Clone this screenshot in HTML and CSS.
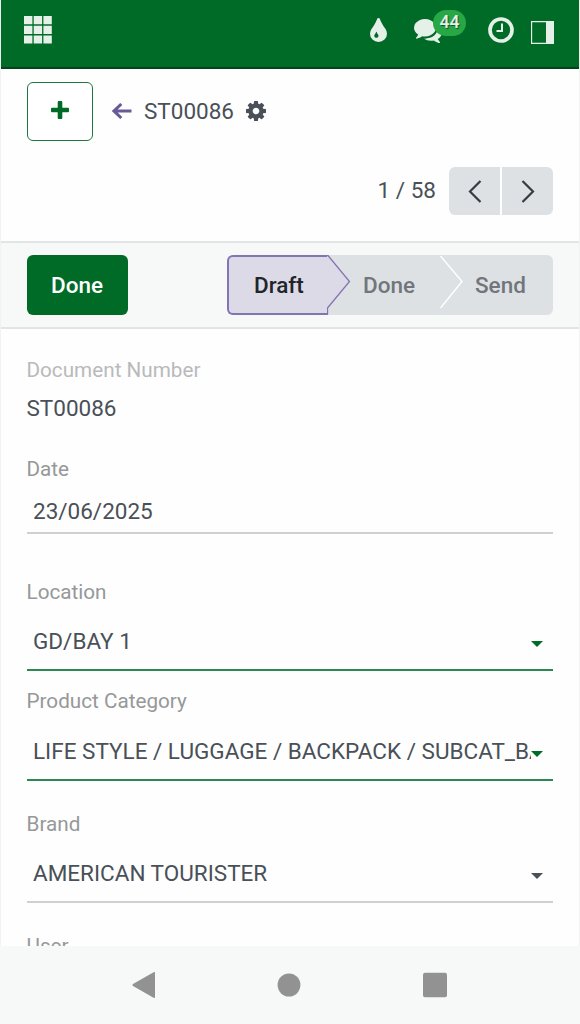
FILE: index.html
```
<!DOCTYPE html>
<html lang="en">

<head>
    <meta charset="UTF-8">
    <meta name="viewport" content="width=device-width, initial-scale=1.0">
    <title>ST00086</title>
    <link rel="stylesheet" href="styles.css">
</head>

<body>
    <div class="app">
        <!-- Navbar -->
        <header class="navbar">
            <a href="#" class="apps" aria-label="Apps">
                <svg width="28" height="28" viewBox="0 0 28 28" fill="currentColor">
                    <path d="M0 0h8.4v8.2H0zM9.7 0h8.4v8.2H9.7zM19.4 0h8.4v8.2h-8.4zM0 9.7h8.4v8.2H0zM9.7 9.7h8.4v8.2H9.7zM19.4 9.7h8.4v8.2h-8.4zM0 19.4h8.4v8.2H0zM9.7 19.4h8.4v8.2H9.7zM19.4 19.4h8.4v8.2h-8.4z"/>
                </svg>
            </a>
            <div class="systray">
                <svg class="tint" viewBox="0 0 1024 1536" preserveAspectRatio="none" fill="currentColor">
                    <path d="M512 1152q0-36-20-69-1-1-15.500-22.500t-25.500-38-25-44-21-50.500q-4-16-21-16t-21 16q-7 23-21 50.500t-25 44-25.500 38-15.500 22.500q-20 33-20 69 0 53 37.500 90.500t90.500 37.500 90.500-37.500 37.500-90.500zm512-128q0 212-150 362t-362 150-362-150-150-362q0-145 81-275 6-9 62.500-90.500t101-151 99.500-178 83-201.500q9-30 34-47t51-17 51.500 17 33.500 47q28 93 83 201.500t99.500 178 101 151 62.500 90.500q81 127 81 275z"/>
                </svg>
                <div class="messages">
                    <svg class="comments" viewBox="0 256 1792 1408" preserveAspectRatio="none" fill="currentColor">
                        <path d="M1408 768q0 139-94 257t-256.500 186.500-353.500 68.500q-86 0-176-16-124 88-278 128-36 9-86 16h-3q-11 0-20.500-8t-11.500-21q-1-3-1-6.500t.5-6.500 2-6l2.500-5 3.500-5.500 4-5 4.500-5 4-4.500q5-6 23-25t26-29.500 22.500-29 25-38.500 20.500-44q-124-72-195-177t-71-224q0-139 94-257t256.500-186.500 353.500-68.500 353.500 68.500 256.500 186.500 94 257zm384 256q0 120-71 224.500t-195 176.500q10 24 20.500 44t25 38.500 22.500 29 26 29.500 23 25q1 1 4 4.500t4.500 5 4 5 3.500 5.500l2.500 5 2 6 .5 6.500-1 6.500q-3 14-13 22t-22 7q-50-7-86-16-154-40-278-128-90 16-176 16-271 0-472-132 58 4 88 4 161 0 309-45t264-129q125-92 192-212t67-254q0-77-23-152 129 71 204 178t75 230z"/>
                    </svg>
                    <span class="badge">44</span>
                </div>
                <svg class="clock" viewBox="0 0 26 26" fill="none" stroke="currentColor">
                    <circle cx="13" cy="13" r="11" stroke-width="3.700"/>
                    <path d="M14 6.500v7.500H8.500" stroke-width="2"/>
                </svg>
                <svg class="panel" viewBox="0 0 23 23">
                    <path d="M.5.5h22v22H.5z" fill="none" stroke="currentColor" stroke-width="1.300"/>
                    <path d="M15 0h8v23h-8z" fill="currentColor"/>
                </svg>
            </div>
        </header>

        <!-- Control panel -->
        <div class="control-panel">
            <div class="breadcrumb">
                <button class="btn-new" aria-label="New">
                    <svg width="18" height="18" viewBox="0 0 18 18" fill="currentColor">
                        <path d="M7.700 0h2.600q1 0 1 1v5.700H17q1 0 1 1v2.600q0 1-1 1h-5.700V17q0 1-1 1H7.700q-1 0-1-1v-5.700H1q-1 0-1-1V7.700q0-1 1-1h5.700V1q0-1 1-1z"/>
                    </svg>
                </button>
                <a href="#" class="back" aria-label="Back">
                    <svg width="20" height="16" viewBox="0 0 20 16" fill="none" stroke="currentColor" stroke-width="3">
                        <path d="M19.500 8H2M9.300 1 2 8l7.300 7"/>
                    </svg>
                </a>
                <span class="record-name">ST00086</span>
                <svg class="gear" viewBox="128 128 1536 1536" fill="currentColor">
                    <path d="M1152 896q0-106-75-181t-181-75-181 75-75 181 75 181 181 75 181-75 75-181zm512-109v222q0 12-8 23t-20 13l-185 28q-19 54-39 91 35 50 107 138 10 12 10 25t-9 23q-27 37-99 108t-94 71q-12 0-26-9l-138-108q-44 23-91 38-16 136-29 186-7 28-36 28h-222q-14 0-24.500-8.500t-11.500-21.500l-28-184q-49-16-90-37l-141 107q-10 9-25 9-14 0-25-11-126-114-165-168-7-10-7-23 0-12 8-23 15-21 51-66.500t54-70.500q-27-50-41-99l-183-27q-13-2-21-12.500t-8-23.500v-222q0-12 8-23t19-13l186-28q14-46 39-92-40-57-107-138-10-12-10-24 0-10 9-23 26-36 98.500-107.500t94.500-71.500q13 0 26 10l138 107q44-23 91-38 16-136 29-186 7-28 36-28h222q14 0 24.500 8.500t11.500 21.500l28 184q49 16 90 37l142-107q9-9 24-9 13 0 25 10 129 119 165 170 7 8 7 22 0 12-8 23-15 21-51 66.500t-54 70.500q26 50 41 98l183 28q13 2 21 12.500t8 23.500z"/>
                </svg>
            </div>
            <div class="pager">
                <span class="counter">1 / 58</span>
                <div class="pager-buttons">
                    <button aria-label="Previous">
                        <svg width="14" height="23" viewBox="0 0 14 23" fill="none" stroke="currentColor" stroke-width="2.200">
                            <path d="M12.500 1 2 11.500 12.500 22"/>
                        </svg>
                    </button>
                    <button aria-label="Next">
                        <svg width="14" height="23" viewBox="0 0 14 23" fill="none" stroke="currentColor" stroke-width="2.200">
                            <path d="M1.500 1 12 11.500 1.500 22"/>
                        </svg>
                    </button>
                </div>
            </div>
        </div>

        <!-- Status bar -->
        <div class="statusbar">
            <button class="btn-done">Done</button>
            <div class="steps">
                <div class="step active">
                    Draft
                    <svg class="arrow" width="24" height="60" viewBox="0 0 24 60">
                        <path d="M0 1h1l21.500 25.500L1 53v6H0z" fill="#dddae7"/>
                        <path d="M0 .5h1l21.500 26L.5 53v6.500" fill="none" stroke="#8374b3" stroke-width="1.300"/>
                    </svg>
                </div>
                <div class="step">
                    Done
                    <svg class="arrow" width="24" height="60" viewBox="0 0 24 60">
                        <path d="M.5 1 22 26.500.5 53" fill="none" stroke="#fff" stroke-width="1.400"/>
                    </svg>
                </div>
                <div class="step last">Send</div>
            </div>
        </div>

        <!-- Form -->
        <main class="form">
            <div class="field readonly">
                <label>Document Number</label>
                <div class="value">ST00086</div>
            </div>
            <div class="field date">
                <label>Date</label>
                <div class="input">23/06/2025</div>
            </div>
            <div class="field required">
                <label>Location</label>
                <div class="input select"><span>GD/BAY 1</span><i class="caret"></i></div>
            </div>
            <div class="field required category">
                <label>Product Category</label>
                <div class="input select"><span>LIFE STYLE / LUGGAGE / BACKPACK / SUBCAT_BACKPACK</span><i class="caret"></i></div>
            </div>
            <div class="field">
                <label>Brand</label>
                <div class="input select"><span>AMERICAN TOURISTER</span><i class="caret"></i></div>
            </div>
            <div class="field">
                <label>User</label>
            </div>
        </main>
    </div>

    <!-- Device navigation -->
    <nav class="device-nav">
        <svg width="24" height="28" viewBox="0 0 24 28" fill="currentColor">
            <path d="M21.600 1.200Q23 .4 23 2v24q0 1.600-1.400.8L1 15q-1.200-1 0-2z"/>
        </svg>
        <svg width="24" height="28" viewBox="0 0 24 28" fill="currentColor">
            <ellipse cx="12" cy="14" rx="11.400" ry="11.500"/>
        </svg>
        <svg width="24" height="28" viewBox="0 0 24 28" fill="currentColor">
            <rect y="1.700" width="24" height="24.600" rx="2"/>
        </svg>
    </nav>
</body>

</html>
```
FILE: styles.css
```
* {
    box-sizing: border-box;
}

body {
    margin: 0;
    height: 1024px;
    overflow: hidden;
    font-family: Roboto, sans-serif;
    font-size: 22.5px;
    color: #495057;
    background-color: #f7f8f8;
}

svg {
    display: block;
    flex: none;
}

button {
    display: flex;
    align-items: center;
    justify-content: center;
    padding: 0;
    border: 0;
    font: inherit;
}

.app {
    height: 946px;
    overflow: hidden;
    border-left: 1px solid #f1f3f3;
    border-right: 1px solid #f1f3f3;
    background-color: #fefefe;
}

/* Navbar */
.navbar {
    display: flex;
    justify-content: space-between;
    height: 69px;
    padding: 16px 25px 0 23px;
    background-color: #006b27;
    border-bottom: 2px solid #00461a;
    color: #e5f0e9;
}

.apps {
    color: inherit;
}

.systray {
    display: flex;
    align-items: flex-start;
}

.tint {
    width: 17px;
    height: 25px;
    margin: 1px 27px 0 0;
}

.messages {
    position: relative;
    width: 74px;
}

.comments {
    width: 28px;
    height: 24px;
    margin-top: 3px;
}

.badge {
    position: absolute;
    left: 19px;
    top: -6px;
    width: 33px;
    height: 26px;
    border-radius: 13px;
    background-color: #28a745;
    font-size: 17.5px;
    font-weight: 500;
    line-height: 24px;
    text-align: center;
    text-shadow: 1px 1px 1px rgba(0, 0, 0, 0.5);
}

.clock {
    width: 26px;
    height: 26px;
    margin: 1px 17px 0 0;
}

.panel {
    width: 23px;
    height: 23px;
    margin-top: 5px;
}

/* Control panel */
.control-panel {
    height: 174px;
    padding: 13px 26px 0 25.5px;
    border-bottom: 2px solid #e2e5e6;
}

.breadcrumb {
    display: flex;
    align-items: center;
    height: 59px;
}

.record-name {
    margin-top: -1px;
}

.btn-new {
    width: 66px;
    height: 59px;
    padding-bottom: 3px;
    border: 1.5px solid #1a7a3d;
    border-radius: 6px;
    background-color: #fff;
    color: #006b27;
}

.back {
    margin: -2px 12px 0 19.5px;
    color: #685a98;
}

.gear {
    width: 20px;
    height: 20px;
    margin: -1px 0 0 12px;
}

.pager {
    display: flex;
    justify-content: flex-end;
    align-items: center;
    margin-top: 26px;
}

.counter {
    margin: -2px 13px 0 0;
}

.pager-buttons {
    display: flex;
    gap: 2px;
}

.pager-buttons button {
    width: 51px;
    height: 48px;
    background-color: #dee1e4;
    border-radius: 6px 0 0 6px;
    color: #373c42;
}

.pager-buttons button:last-child {
    border-radius: 0 6px 6px 0;
}

/* Status bar */
.statusbar {
    display: flex;
    justify-content: space-between;
    height: 86px;
    padding: 12px 26px 0 25.5px;
    background-color: #f7f8f8;
    border-bottom: 2px solid #e2e5e6;
    font-weight: 500;
}

.btn-done {
    width: 101px;
    height: 60px;
    padding-bottom: 1px;
    border-radius: 6px;
    background-color: #006b27;
    color: #fff;
}

.steps {
    display: flex;
    width: 326px;
    height: 60px;
    border-radius: 6px;
    background-color: #dee1e4;
    color: #71767c;
}

.step {
    position: relative;
    display: flex;
    align-items: center;
    width: 112px;
    padding: 0 0 1px 35px;
}

.step.active {
    width: 101px;
    padding-left: 25px;
    border: 2px solid #8374b3;
    border-right: 0;
    border-radius: 6px 0 0 6px;
    background-color: #dddae7;
    color: #212529;
}

.arrow {
    position: absolute;
    left: 100%;
    top: 0;
}

.step.active .arrow {
    left: calc(100% - 1px);
    top: -2px;
}

/* Form */
.form {
    padding: 29px 26px 0 25.5px;
}

.field {
    margin-bottom: 31px;
}

.field label {
    display: block;
    height: 24px;
    line-height: 24px;
    font-size: 20.7px;
    color: #969899;
}

.readonly {
    margin-bottom: 35px;
}

.readonly label {
    color: #b8babb;
}

.value {
    height: 28px;
    margin-top: 12px;
    line-height: 28px;
}

.input {
    display: flex;
    align-items: center;
    height: 57px;
    margin-top: 10px;
    padding: 0 7px 2px 6.5px;
    border-bottom: 2px solid #ced0d2;
    white-space: nowrap;
}

.date {
    margin-bottom: 46px;
}

.date .input {
    height: 42px;
    margin-top: 11px;
}

.required {
    margin-bottom: 18px;
}

.required .input {
    border-color: #2b8850;
}

.category {
    margin-bottom: 31px;
}

.category .input {
    margin-top: 11px;
}

.select span {
    flex: 1;
    min-width: 0;
    overflow: hidden;
}

.caret {
    margin: 7px 3px 0 0;
    border: 6px solid transparent;
    border-top-color: #495057;
    border-bottom: 0;
}

.required .caret {
    border-top-color: #006b27;
}

/* Device navigation */
.device-nav {
    display: flex;
    justify-content: space-between;
    align-items: center;
    height: 78px;
    padding: 0 133.5px 0 132px;
    color: #929292;
}
```
